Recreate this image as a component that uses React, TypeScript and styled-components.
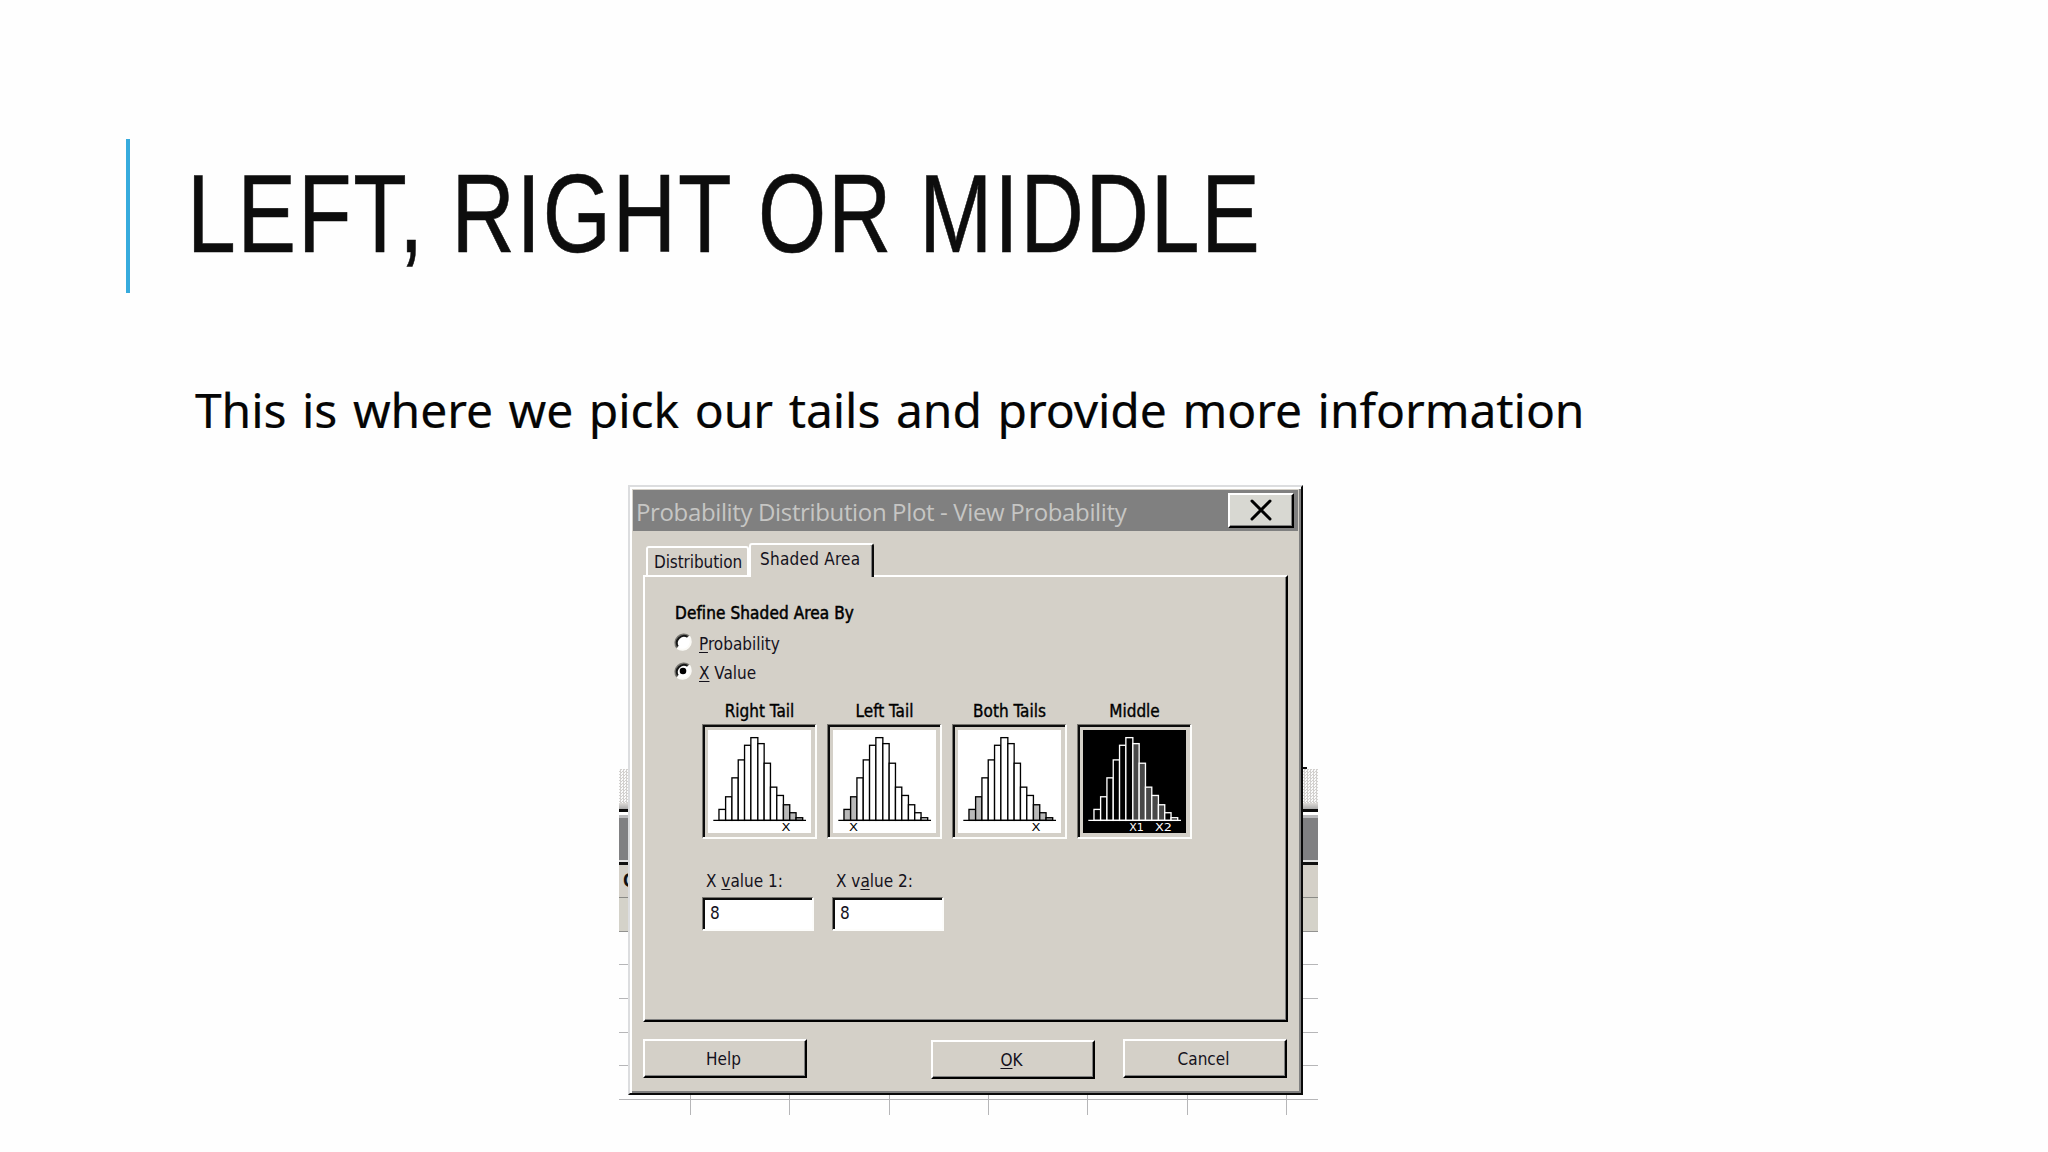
import React from 'react';

import styled, { createGlobalStyle, css } from 'styled-components';

const GlobalStyle = createGlobalStyle`
    * {
        box-sizing: border-box;
    }

    body {
        margin: 0;
        background: #fff;
    }
`;

const face = '#d4d0c8';

// Classic raised edge: white top/left, dark bottom/right
const raised = css`
    border-style: solid;
    border-width: 2px;
    border-color: #fff #000 #000 #fff;
    box-shadow: inset -1px -1px 0 #808080;
`;

const sunken = css`
    border-style: solid;
    border-width: 1px 2px 2px 1px;
    border-color: #77756f #fdfdfb #fdfdfb #77756f;
    box-shadow: inset 2px 2px 0 #0c0c0c;
`;

const Slide = styled.main`
    display: flex;
    flex-direction: column;
    align-items: flex-start;
    width: 2048px;
    height: 1152px;
    overflow: hidden;
    background: #fefefe;
`;

const Header = styled.header`
    flex: none;
    height: 154px;
    margin: 139px 0 0 126px;
    padding-left: 57px;
    border-left: 4px solid #37abdd;
`;

const Title = styled.h1`
    margin: -2px 0 0;
    color: #0d0d0d;
    font: 400 111px/154px "Liberation Sans", Arial, sans-serif;
    letter-spacing: 2.32px;
    white-space: nowrap;
    transform: scaleX(0.79);
    transform-origin: left center;
    -webkit-text-stroke: 0.6px #0d0d0d;
`;

const Subtitle = styled.p`
    margin: 87px 0 0 195px;
    color: #050505;
    font: 400 48px/60px "Noto Sans", sans-serif;
    letter-spacing: -0.07px;
    word-spacing: 3.2px;
    white-space: nowrap;
    -webkit-text-stroke: 0.2px #050505;
`;

const Capture = styled.section`
    display: grid;
    flex: none;
    width: 699px;
    height: 630px;
    margin: 45px 0 0 619px;
    overflow: hidden;
`;

/* ---- worksheet behind the dialog ---- */

const Worksheet = styled.div`
    grid-area: 1 / 1;
    display: flex;
    flex-direction: column;
    padding-top: 282px;
    overflow: hidden;
`;

const Tick = styled.div`
    flex: none;
    align-self: flex-end;
    width: 14px;
    height: 2px;
    margin-right: 11px;
    background: #111;
`;

const Hatch = styled.div`
    flex: none;
    height: 34px;
    background: repeating-conic-gradient(#d2d0ce 0 25%, #fbfbfb 0 50%) 0 0 / 3px 3px;
`;

const Strip = styled.div<{ $h: number; $color: string }>`
    flex: none;
    height: ${p => p.$h}px;
    background: ${p => p.$color};
`;

const HeadRow = styled.div`
    flex: none;
    height: 33px;
    padding-left: 4px;
    border-bottom: 1px solid #8a8a86;
    background: ${face};
    color: #111;
    font: 700 20px/31px "Liberation Sans", Arial, sans-serif;
`;

const SheetRow = styled.div<{ $h: number }>`
    display: grid;
    flex: none;
    grid-template-columns: 72px repeat(6, 99.33px) 1fr;
    height: ${p => p.$h}px;
    border-bottom: 1px solid #b6b6b8;
`;

const Cell = styled.div`
    border-right: 1px solid #b6b6b8;

    &:last-child {
        border-right: 0;
    }
`;

/* ---- dialog ---- */

const Dialog = styled.div`
    grid-area: 1 / 1;
    display: flex;
    flex-direction: column;
    width: 675px;
    height: 610px;
    margin-left: 9px;
    padding: 3px;
    border: 2px solid;
    border-color: #dcdddf #0a0a0a #0a0a0a #dcdddf;
    box-shadow: inset 2px 2px 0 #fff, inset -2px -2px 0 #808080;
    background: ${face};
    color: #14121c;
    font: 17px/20px "DejaVu Sans Condensed", "DejaVu Sans", sans-serif;
`;

const TitleBar = styled.div`
    display: flex;
    flex: none;
    align-items: flex-start;
    justify-content: space-between;
    height: 41px;
    padding: 3px 4px 0 3px;
    background: #808080;
`;

const Caption = styled.span`
    color: #c6c6c4;
    font: 24px/37px "Open Sans", sans-serif;
    letter-spacing: -0.36px;
    white-space: nowrap;
`;

const CloseButton = styled.button`
    ${raised}
    display: flex;
    align-items: center;
    justify-content: center;
    width: 66px;
    height: 35px;
    padding: 0 0 1px;
    background: #d8d8d2;
`;

const TabList = styled.div`
    display: flex;
    flex: none;
    align-items: flex-end;
    height: 44px;
    padding-left: 13px;
`;

const Tab = styled.div<{ $active?: boolean }>`
    width: 103px;
    height: 29px;
    padding: 4px 0 0 6px;
    border: 2px solid #fff;
    border-bottom: 0;
    border-radius: 3px 3px 0 0;
    background: ${face};
    letter-spacing: -0.1px;

    ${p => p.$active && css`
        z-index: 1;
        width: 125px;
        height: 34px;
        margin: 0 0 -2px 0;
        padding: 4px 0 0 9px;
        border-right: 2px solid #0a0a0a;
        box-shadow: inset -1px 0 0 #808080;
        letter-spacing: 0.25px;
    `}
`;

const Panel = styled.div`
    ${raised}
    flex: none;
    width: 645px;
    height: 447px;
    margin-left: 10px;
    padding: 26px 0 0 28px;
`;

const GroupLabel = styled.div`
    padding: 0 0 6px 2px;
    color: #000;
    letter-spacing: 0.1px;
    -webkit-text-stroke: 0.5px #000;
`;

const Option = styled.label`
    display: flex;
    align-items: center;
    gap: 6px;
    height: 29px;

    svg {
        margin-top: -4px;
    }
`;

const Key = styled.span`
    text-decoration: underline;
    text-decoration-thickness: 1px;
    text-underline-offset: 2px;
`;

const Tails = styled.div`
    display: grid;
    grid-template-columns: repeat(4, 115px);
    gap: 10px;
    margin: 14px 0 0 29px;
`;

const Tail = styled.div`
    display: flex;
    flex-direction: column;
    gap: 3px;
    color: #000;
    text-align: center;
    -webkit-text-stroke: 0.35px #000;
`;

const Frame = styled.div`
    ${sunken}
    display: flex;
    height: 115px;
    padding: 5px 0 0 5px;
    -webkit-text-stroke: 0;
`;

const Values = styled.div`
    display: flex;
    gap: 18px;
    margin: 32px 0 0 29px;
`;

const Field = styled.label`
    display: flex;
    flex-direction: column;
    gap: 6px;
    width: 112px;
    text-indent: 4px;
`;

const Input = styled.div`
    ${sunken}
    height: 34px;
    padding: 2px 0 0 2px;
    background: #fff;
    line-height: 27px;
    text-indent: 5px;
`;

const Footer = styled.div`
    display: flex;
    align-items: flex-start;
    gap: 28px;
    margin: 17px 11px 0 10px;
`;

const Button = styled.button<{ $push?: boolean }>`
    ${raised}
    width: 164px;
    height: 39px;
    margin: ${p => (p.$push ? '1px 0 0 auto' : '0')};
    padding: 1px 3px 0 0;
    background: ${face};
    color: inherit;
    font: inherit;
`;

interface RadioProps {
    checked?: boolean;
}

const Radio: React.FC<RadioProps> = ({ checked }) => (
    <svg width="20" height="20" viewBox="0 0 20 20" fill="none">
        <circle cx="10" cy="10" r="8" fill="#fff" />
        <path d="M4.2 16A8.4 8.4 0 0 1 16 4.2" stroke="#77756f" strokeWidth="2" />
        <path d="M4.8 14.6A7.2 7.2 0 0 1 14.6 4.8" stroke="#161616" strokeWidth="2" />
        <path d="M4.2 16A8.4 8.4 0 0 0 16 4.2" stroke="#fbfaf6" strokeWidth="2" />
        {checked && <circle cx="10" cy="10" r="3.3" fill="#000" />}
    </svg>
);

interface Mark {
    text: string;
    x: number;
    width: number;
}

interface HistogramProps {
    shaded: number[];
    marks: Mark[];
    inverted?: boolean;
}

const lefts = [33, 53, 72, 91, 110, 129, 150, 169, 188, 207, 227, 246, 265, 285];
const tops = [239, 201, 144, 90, 46, 23, 41, 100, 172, 197, 225, 249, 264];

const Histogram: React.FC<HistogramProps> = ({ shaded, marks, inverted }) => {
    const ink = inverted ? '#fff' : '#000';
    const paper = inverted ? '#000' : '#fff';
    const shade = inverted ? '#484848' : '#b9b9b9';

    return (
        <svg width="103" height="103" viewBox="0 0 310 310">
            <rect width="310" height="310" fill={paper} />
            {tops.map((top, i) => (
                <rect
                    key={i}
                    x={lefts[i]}
                    y={top}
                    width={lefts[i + 1] - lefts[i]}
                    height={272 - top}
                    fill={shaded.includes(i) ? shade : paper}
                    stroke={ink}
                    strokeWidth="4"
                />
            ))}
            <path d="M16 272H295" stroke={ink} strokeWidth="4" />
            {marks.map(({ text, x, width }) => (
                <text
                    key={text}
                    x={x}
                    y="304"
                    fill={ink}
                    fontFamily="DejaVu Sans"
                    fontSize="32"
                    textLength={width}
                    lengthAdjust="spacingAndGlyphs"
                >
                    {text}
                </text>
            ))}
        </svg>
    );
};

const tails: (HistogramProps & { name: string })[] = [
    { name: 'Right Tail', shaded: [10, 11, 12], marks: [{ text: 'X', x: 221, width: 27 }] },
    { name: 'Left Tail', shaded: [0, 1], marks: [{ text: 'X', x: 48, width: 27 }] },
    { name: 'Both Tails', shaded: [0, 1, 10, 11, 12], marks: [{ text: 'X', x: 221, width: 27 }] },
    {
        name: 'Middle',
        shaded: [6, 7, 8, 9, 10],
        marks: [{ text: 'X1', x: 139, width: 44 }, { text: 'X2', x: 217, width: 51 }],
        inverted: true,
    },
];

const App: React.FC = () => {
    return (
        <Slide>
            <GlobalStyle />
            <Header>
                <Title>LEFT, RIGHT OR MIDDLE</Title>
            </Header>
            <Subtitle>This is where we pick our tails and provide more information</Subtitle>

            <Capture>
                <Worksheet>
                    <Tick />
                    <Hatch />
                    <Strip $h={6} $color="linear-gradient(#dedbd8, #aaa)" />
                    <Strip $h={3} $color="#0a0a0a" />
                    <Strip $h={3} $color="#fff" />
                    <Strip $h={3} $color="#b9b9bb" />
                    <Strip $h={42} $color="#808082" />
                    <Strip $h={2} $color="#e2e2e2" />
                    <Strip $h={3} $color="#111" />
                    <HeadRow>C</HeadRow>
                    <Strip $h={33} $color="#d4d2c9" />
                    <Strip $h={1} $color="#929290" />
                    {[33, 34, 34, 33].map((h, i) => (
                        <SheetRow key={i} $h={h} />
                    ))}
                    {[34, 20].map(h => (
                        <SheetRow key={h} $h={h}>
                            {Array.from({ length: 8 }, (_, i) => <Cell key={i} />)}
                        </SheetRow>
                    ))}
                </Worksheet>

                <Dialog>
                    <TitleBar>
                        <Caption>Probability Distribution Plot - View Probability</Caption>
                        <CloseButton>
                            <svg width="22" height="22" viewBox="0 0 22 22">
                                <path d="M2 2L20 20M20 2L2 20" stroke="#000" strokeWidth="3" strokeLinecap="round" />
                            </svg>
                        </CloseButton>
                    </TitleBar>

                    <TabList>
                        <Tab>Distribution</Tab>
                        <Tab $active>Shaded Area</Tab>
                    </TabList>

                    <Panel>
                        <GroupLabel>Define Shaded Area By</GroupLabel>
                        <Option>
                            <Radio />
                            <span><Key>P</Key>robability</span>
                        </Option>
                        <Option>
                            <Radio checked />
                            <span><Key>X</Key> Value</span>
                        </Option>

                        <Tails>
                            {tails.map(({ name, ...chart }) => (
                                <Tail key={name}>
                                    {name}
                                    <Frame>
                                        <Histogram {...chart} />
                                    </Frame>
                                </Tail>
                            ))}
                        </Tails>

                        <Values>
                            <Field>
                                <span>X <Key>v</Key>alue 1:</span>
                                <Input>8</Input>
                            </Field>
                            <Field>
                                <span>X v<Key>a</Key>lue 2:</span>
                                <Input>8</Input>
                            </Field>
                        </Values>
                    </Panel>

                    <Footer>
                        <Button>Help</Button>
                        <Button $push><Key>O</Key>K</Button>
                        <Button>Cancel</Button>
                    </Footer>
                </Dialog>
            </Capture>
        </Slide>
    );
};

export default App;
